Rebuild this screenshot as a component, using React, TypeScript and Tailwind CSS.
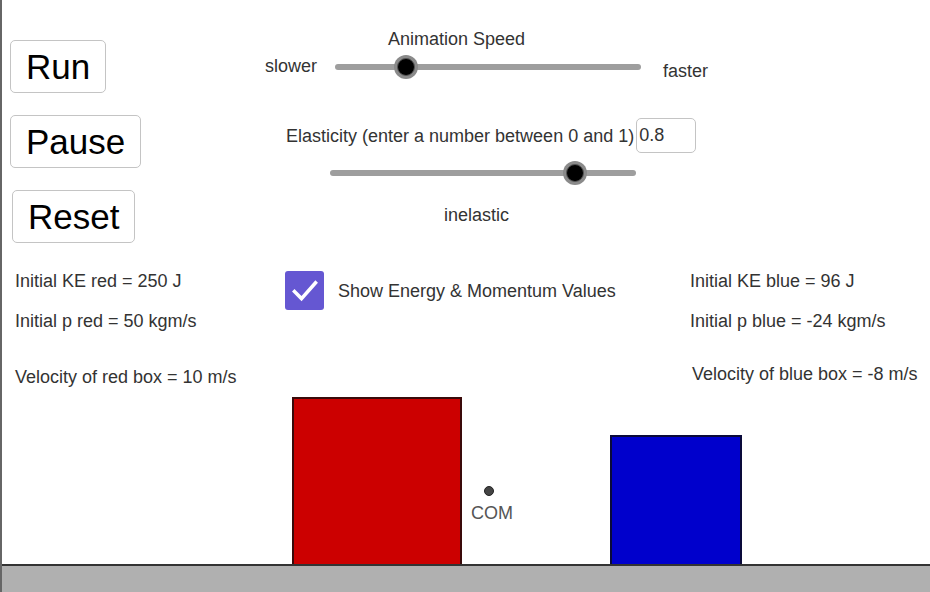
import React from 'react';

// GeoGebra-style applet: groups sit at their spots on the board, content inside flows.
const font = { fontFamily: '"Liberation Sans", Arial, sans-serif' };

const Slider = ({ width, knob }: { width: number; knob: number }) => (
  <div className="relative h-[24px] shrink-0" style={{ width }}>
    <div className="absolute left-0 right-0 top-[9px] h-[6px] rounded-full bg-[#9e9e9e]" />
    <div
      className="absolute top-0 w-[24px] h-[24px] rounded-full bg-[#8a8a8a] flex items-center justify-center"
      style={{ left: knob - 12 }}
    >
      <div className="w-[18px] h-[18px] rounded-full bg-black border border-[#555]" />
    </div>
  </div>
);

const BigButton = ({ label }: { label: string }) => (
  <button className="h-[53px] px-[15px] bg-white border border-[#c4c4c4] rounded-[5px] text-[35px] leading-none text-black self-start">
    {label}
  </button>
);

const labelClass = 'whitespace-nowrap text-[18px] leading-[20px] text-[#333]';

export default function App() {
  return (
    <div className="relative w-[930px] h-[592px] bg-white overflow-hidden border-l-2 border-[#666]" style={font}>
      {/* buttons */}
      <div className="absolute left-[8px] top-[40px] flex flex-col gap-[22px]">
        <BigButton label="Run" />
        <BigButton label="Pause" />
        <div className="ml-[2px]">
          <BigButton label="Reset" />
        </div>
      </div>

      {/* animation speed */}
      <div className="absolute left-[263px] top-[29px] flex flex-col text-[18px] leading-[20px] text-[#333]">
        <div className="pl-[123px]">Animation Speed</div>
        <div className="flex items-start mt-[6px]">
          <span className="mt-[1px]">slower</span>
          <div className="ml-[18px]">
            <Slider width={306} knob={71} />
          </div>
          <span className="ml-[22px] mt-[6px]">faster</span>
        </div>
      </div>

      {/* elasticity */}
      <div className="absolute left-[284px] top-[118px] flex flex-col text-[18px] leading-[20px] text-[#333]">
        <div className="flex items-center">
          <span>Elasticity (enter a number between 0 and 1)</span>
          <div className="ml-[2px] w-[60px] h-[35px] border border-[#c4c4c4] rounded-[5px] leading-[33px] pl-[2px]">0.8</div>
        </div>
        <div className="ml-[44px] mt-[8px]">
          <Slider width={306} knob={245} />
        </div>
        <div className="ml-[158px] mt-[20px]">inelastic</div>
      </div>

      {/* red values */}
      <div className={`absolute left-[13px] top-[271px] flex flex-col gap-[20px] ${labelClass}`}>
        <div>Initial KE red = 250 J</div>
        <div>Initial p red = 50 kgm/s</div>
        <div className="mt-[16px]">Velocity of red box = 10 m/s</div>
      </div>

      {/* checkbox */}
      <div className="absolute left-[283px] top-[271px] flex items-center gap-[14px]">
        <div className="w-[39px] h-[39px] rounded-[3px] bg-[#6557d2] flex items-center justify-center">
          <svg width="28" height="28" viewBox="0 0 24 24" fill="none" stroke="white" strokeWidth="3" strokeLinecap="square">
            <path d="M3 12.5l6 6L21 5" />
          </svg>
        </div>
        <span className={labelClass}>Show Energy &amp; Momentum Values</span>
      </div>

      {/* blue values */}
      <div className={`absolute left-[688px] top-[271px] flex flex-col gap-[20px] ${labelClass}`}>
        <div>Initial KE blue = 96 J</div>
        <div>Initial p blue = -24 kgm/s</div>
        <div className="mt-[13px] ml-[2px]">Velocity of blue box = -8 m/s</div>
      </div>

      {/* boxes */}
      <div className="absolute left-[290px] top-[397px] w-[170px] h-[169px] bg-[#cc0000] border-2 border-[#3a0a0a]" />
      <div className="absolute left-[608px] top-[435px] w-[132px] h-[131px] bg-[#0000cc] border-2 border-[#0a0a3a]" />

      {/* center of mass */}
      <div className="absolute left-[469px] top-[486px] flex flex-col items-center">
        <div className="w-[10px] h-[10px] rounded-full bg-[#444] border border-[#222] mr-[7px]" />
        <div className="mt-[7px] text-[18px] leading-[20px] text-[#555]">COM</div>
      </div>

      {/* ground */}
      <div className="absolute left-0 right-0 top-[564px] bottom-0 bg-[#b0b0b0] border-t-2 border-[#333]" />
    </div>
  );
}
